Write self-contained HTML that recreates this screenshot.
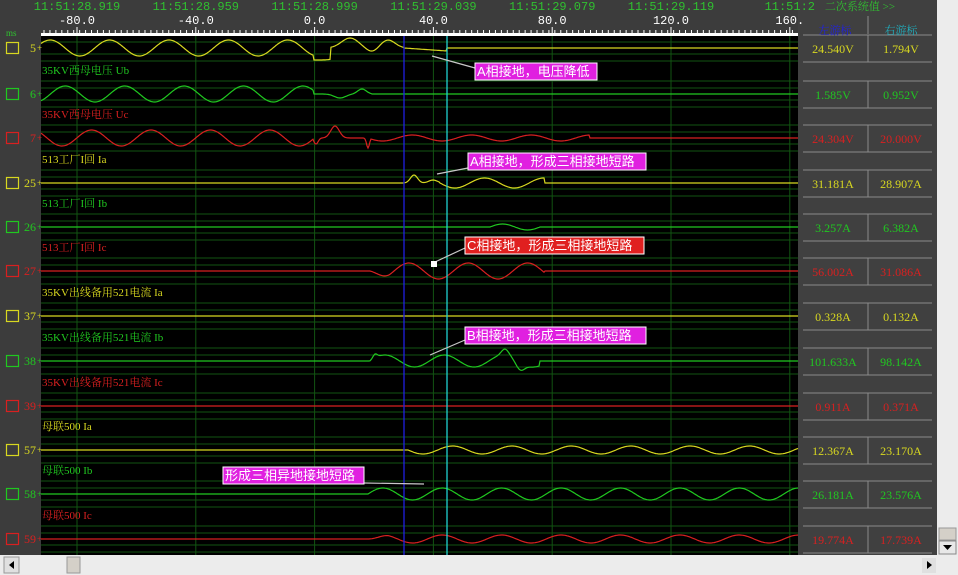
<!DOCTYPE html>
<html><head><meta charset="utf-8">
<style>
html,body{margin:0;padding:0;width:958px;height:575px;overflow:hidden;background:#3c3c3c;font-family:"Liberation Serif","Noto Serif CJK SC","Noto Sans CJK SC",serif;}
svg{position:absolute;left:0;top:0}
</style></head><body>
<svg id="s" width="958" height="575" xmlns="http://www.w3.org/2000/svg" font-family="Liberation Serif, Noto Serif CJK SC, Noto Sans CJK SC, serif">
<rect x="0" y="0" width="958" height="575" fill="#3c3c3c"/>
<rect x="41" y="36" width="757" height="519" fill="#000"/>
<rect x="798" y="0" width="139" height="555" fill="#404040"/>
<rect x="937" y="0" width="21" height="555" fill="#ececec"/>
<rect x="939" y="528" width="17" height="12" fill="#d4d0c8" stroke="#999"/>
<rect x="939" y="541" width="17" height="13" fill="#e8e8e8" stroke="#888"/>
<path d="M943 545 L952 545 L947.5 550 Z" fill="#000"/>
<rect x="0" y="555" width="958" height="20" fill="#ececec"/>
<rect x="4" y="557" width="15" height="16" fill="#e0e0e0" stroke="#999"/>
<path d="M14 561 L14 569 L9 565 Z" fill="#000"/>
<rect x="67" y="557" width="13" height="16" fill="#d4d0c8" stroke="#999"/>
<rect x="922" y="558" width="14" height="15" fill="#e0e0e0"/>
<path d="M927 561 L927 569 L932 565 Z" fill="#000"/>
<g id="grid"></g>
<g id="waves"></g>
<g id="labels"></g>
</svg>
<script>
var NS="http://www.w3.org/2000/svg";
function el(p,t,a,txt){var e=document.createElementNS(NS,t);for(var k in a)e.setAttribute(k,a[k]);if(txt!==undefined)e.textContent=txt;document.getElementById(p).appendChild(e);return e;}
var base=[48,94,138,183,227,271,316,361,406,450,494,539];
var cols=["#d8d820","#20c820","#d82020"];
var nums=["5","6","7","25","26","27","37","38","39","57","58","59"];
base.forEach(function(b){[-13,-6,6,13].forEach(function(d){el("grid","line",{x1:41,x2:798,y1:b+d,y2:b+d,stroke:"#125412","stroke-width":1});});});
for(var i=0;i<7;i++){var x=77+i*118.8;el("grid","line",{x1:x,x2:x,y1:36,y2:555,stroke:"#125412"});}
var times=["11:51:28.919","11:51:28.959","11:51:28.999","11:51:29.039","11:51:29.079","11:51:29.119","11:51:2"];
var ms=["-80.0","-40.0","0.0","40.0","80.0","120.0","160."];
for(var i=0;i<7;i++){var x=77+i*118.8;
 el("labels","text",{x:x,y:10,fill:"#30c030","font-size":12,"text-anchor":"middle","font-family":"Liberation Mono, monospace"},times[i]);
 el("labels","text",{x:x,y:-2,fill:"#30c030","font-size":12,"text-anchor":"middle","font-family":"Liberation Mono, monospace"},"2010/11/05");
 el("labels","text",{x:x,y:24,fill:"#fff","font-size":12,"text-anchor":"middle","font-family":"Liberation Mono, monospace"},ms[i]);}
el("labels","rect",{x:41,y:33,width:757,height:3,fill:"#fff"});
for(var x=44;x<798;x+=5.94){el("labels","line",{x1:x,x2:x,y1:33,y2:30,stroke:"#fff"});}
for(var i=0;i<7;i++){var x=77+i*118.8;el("labels","line",{x1:x,x2:x,y1:33,y2:27,stroke:"#fff"});}
el("labels","text",{x:6,y:36,fill:"#30c030","font-size":9},"ms");
var P=59.4;
function wave(i,f){var d="";for(var x=41;x<=798;x+=1){var y=base[i]-f(x);d+=(x==41?"M":"L")+x+" "+y.toFixed(1);}el("waves","path",{d:d,stroke:cols[i%3],fill:"none","stroke-width":1.2});}
function bump(x,c,w,a){var t=(x-c)/w;return a*Math.exp(-t*t);}
function win(x,a,b){return x>=a&&x<=b?1:0;}
wave(0,function(x){if(x<314)return 8*Math.sin((x-41)/P*2*Math.PI+0.6);
 if(x<404)return -12*win(x,314,330)+bump(x,350,12,10)+bump(x,388,10,8)-bump(x,372,8,4);
 if(x<447)return -(x-404)/43*3; return 0;});
wave(1,function(x){if(x<314)return 8*Math.sin((x-41)/P*2*Math.PI-1.0);if(x<372)return bump(x,340,8,-4)+bump(x,362,6,5);return 0;});
wave(2,function(x){if(x<314)return 8*Math.sin((x-41)/P*2*Math.PI+2.5);if(x<372)return bump(x,335,6,12)-bump(x,368,2,10)-bump(x,316,3,6);return 3*Math.sin((x-41)/P*2*Math.PI)*(x<590?1:0);});
wave(3,function(x){if(x<404)return 0;if(x<440)return bump(x,414,5,8)+bump(x,433,6,3);if(x<545)return -5*Math.sin((x-440)/P*2*Math.PI);return 0;});
wave(4,function(x){return (x>490&&x<540)?3*Math.sin((x-490)/50*2*Math.PI):0;});
wave(5,function(x){if(x<370)return 0;if(x<545)return -8*Math.sin((x-370)/P*2*Math.PI+0.6)*Math.min(1,(x-370)/20);return 0;});
wave(6,function(){return 0;});
wave(7,function(x){if(x<370)return 0;if(x<540)return 6*Math.sin((x-370)/P*2*Math.PI)+bump(x,375,3,4)-bump(x,520,6,8)+bump(x,505,5,6);return 0;});
wave(8,function(){return 0;});
wave(9,function(x){return x<408?0:-4*Math.sin((x-408)/P*2*Math.PI);});
wave(10,function(x){return x<368?0:6*Math.sin((x-368)/P*2*Math.PI);});
wave(11,function(x){return x<368?0:4*Math.sin((x-368)/P*2*Math.PI)*Math.min(1,(x-368)/20);});
el("waves","line",{x1:404,x2:404,y1:36,y2:555,stroke:"#2020e0","stroke-width":1.3});
el("waves","line",{x1:447,x2:447,y1:36,y2:555,stroke:"#20d0d0","stroke-width":1.3});
var names=["","35KV西母电压 Ub","35KV西母电压 Uc","513工厂I回 Ia","513工厂I回 Ib","513工厂I回 Ic","35KV出线备用521电流 Ia","35KV出线备用521电流 Ib","35KV出线备用521电流 Ic","母联500 Ia","母联500 Ib","母联500 Ic"];
var vals=[["24.540V","1.794V"],["1.585V","0.952V"],["24.304V","20.000V"],["31.181A","28.907A"],["3.257A","6.382A"],["56.002A","31.086A"],["0.328A","0.132A"],["101.633A","98.142A"],["0.911A","0.371A"],["12.367A","23.170A"],["26.181A","23.576A"],["19.774A","17.739A"]];
base.forEach(function(b,i){var c=cols[i%3];
 el("labels","rect",{x:6.5,y:b-5.5,width:12,height:11,fill:"none",stroke:c,"stroke-width":1.2});
 el("labels","text",{x:36,y:b+4,fill:c,"font-size":12,"text-anchor":"end"},nums[i]);
 el("labels","text",{x:37,y:b+3,fill:c,"font-size":9},"+");
 if(names[i])el("labels","text",{x:42,y:b-20,fill:c,"font-size":11},names[i]);
 el("labels","line",{x1:803,x2:932,y1:b-13,y2:b-13,stroke:"#8a8a8a"});
 el("labels","line",{x1:803,x2:932,y1:b+14,y2:b+14,stroke:"#8a8a8a"});
 el("labels","line",{x1:868,x2:868,y1:b-13,y2:b+14,stroke:"#8a8a8a"});
 el("labels","text",{x:833,y:b+5,fill:c,"font-size":12,"text-anchor":"middle"},vals[i][0]);
 el("labels","text",{x:901,y:b+5,fill:c,"font-size":12,"text-anchor":"middle"},vals[i][1]);
});
el("labels","line",{x1:868,x2:868,y1:16,y2:34,stroke:"#8a8a8a"});
el("labels","text",{x:860,y:10,fill:"#30c030","font-size":11,"text-anchor":"middle"},"二次系统值 >>");
el("labels","text",{x:835,y:34,fill:"#2020e0","font-size":11,"text-anchor":"middle"},"左游标");
el("labels","text",{x:901,y:34,fill:"#20b0c0","font-size":11,"text-anchor":"middle"},"右游标");
function ann(x,y,w,bg,t,lx1,ly1,lx2,ly2){el("labels","line",{x1:lx1,y1:ly1,x2:lx2,y2:ly2,stroke:"#c8c8c8","stroke-width":1.2});
 el("labels","rect",{x:x,y:y,width:w,height:17,fill:bg,stroke:"#fff","stroke-width":1});
 el("labels","text",{x:x+2,y:y+13,fill:"#fff","font-size":13,"font-family":"Liberation Sans, Noto Sans CJK SC, sans-serif"},t);}
ann(475,63,122,"#e020e0","A相接地，电压降低",432,56,475,68);
ann(468,153,178,"#e020e0","A相接地，形成三相接地短路",437,174,468,168);
ann(465,237,179,"#e02020","C相接地，形成三相接地短路",435,262,465,248);
el("labels","rect",{x:431,y:261,width:6,height:6,fill:"#fff"});
ann(465,327,181,"#e020e0","B相接地，形成三相接地短路",430,355,465,340);
ann(223,467,141,"#e020e0","形成三相异地接地短路",364,483,424,484);
</script>
</body></html>
